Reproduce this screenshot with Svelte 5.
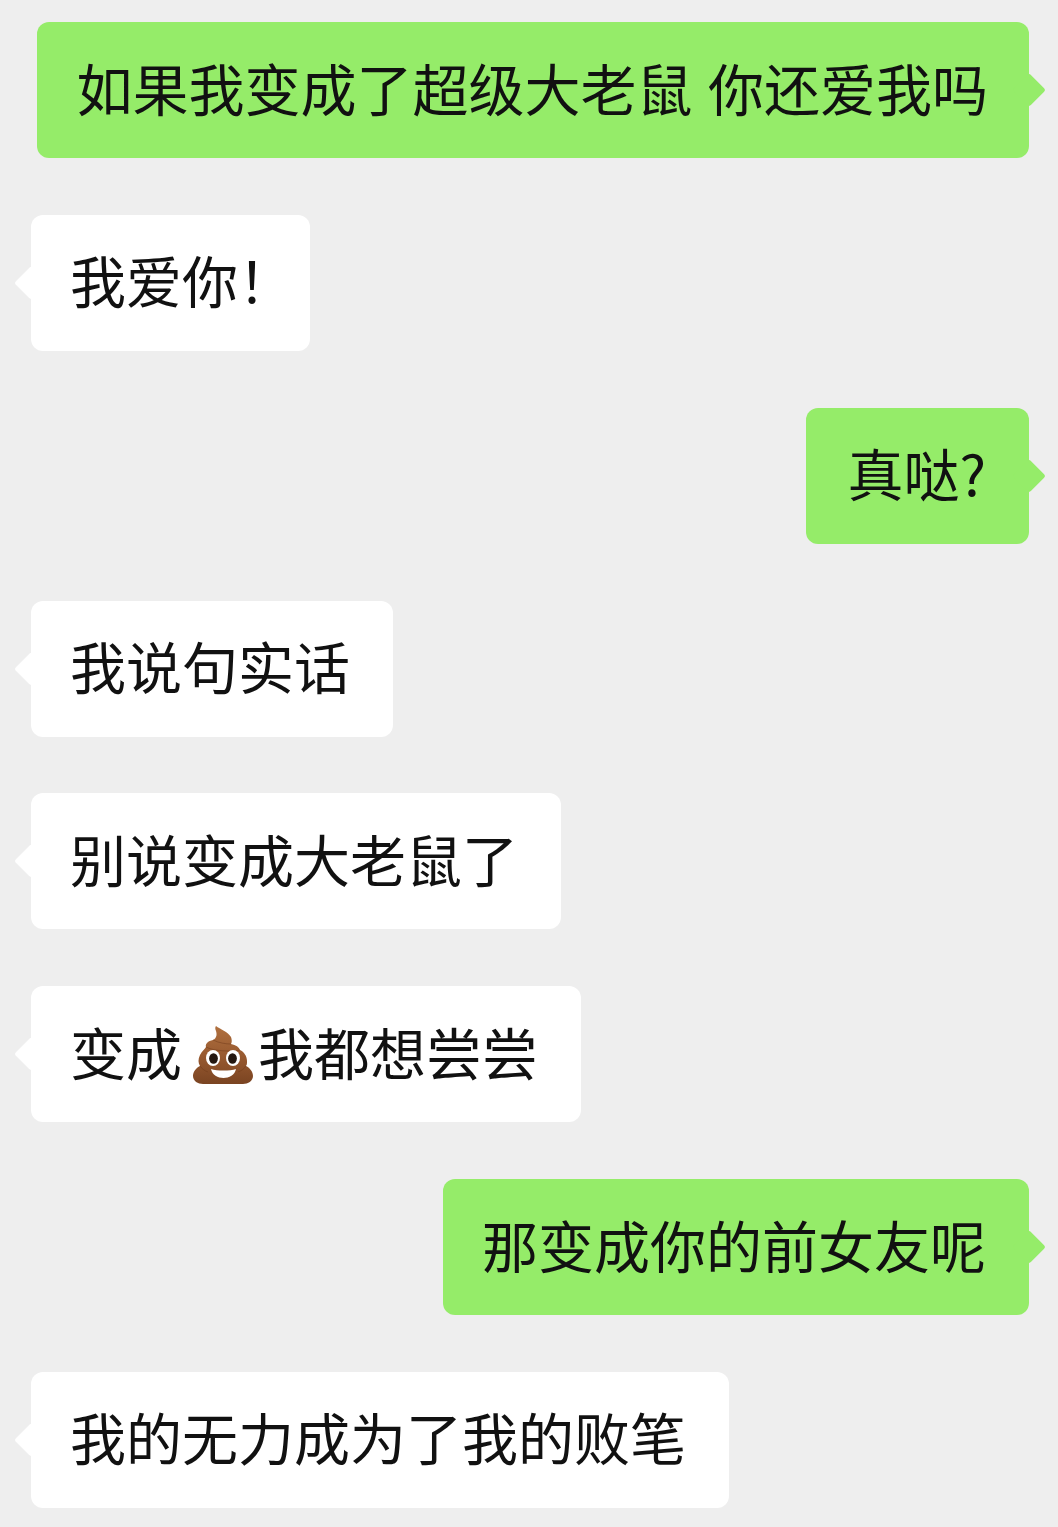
<script lang="ts">
	type Msg = { id: number; mine: boolean; parts: string[]; tight?: boolean; wide?: boolean; spaced?: boolean };

	// an empty part marks where the emoji sits
	const messages: Msg[] = [
		{ id: 1, mine: true, parts: ['如果我变成了超级大老鼠 你还爱我吗'], spaced: true },
		{ id: 2, mine: false, parts: ['我爱你！'], tight: true },
		{ id: 3, mine: true, parts: ['真哒?'], wide: true },
		{ id: 4, mine: false, parts: ['我说句实话'] },
		{ id: 5, mine: false, parts: ['别说变成大老鼠了'] },
		{ id: 6, mine: false, parts: ['变成', '', '我都想尝尝'] },
		{ id: 7, mine: true, parts: ['那变成你的前女友呢'] },
		{ id: 8, mine: false, parts: ['我的无力成为了我的败笔'] },
	];
</script>

<div class="chat">
	{#each messages as msg (msg.id)}
		<div class="bubble" class:mine={msg.mine} class:tight={msg.tight} class:wide={msg.wide} class:spaced={msg.spaced}>
			{#each msg.parts as part}
				{#if part}
					<span>{part}</span>
				{:else}
					<svg class="poop" viewBox="0 0 60 58" aria-label="poop emoji">
						<defs>
							<linearGradient id="poop-fill" x1="0" y1="0" x2="0" y2="1">
								<stop offset="0" stop-color="#b0703f" />
								<stop offset="0.55" stop-color="#96582f" />
								<stop offset="1" stop-color="#7a4422" />
							</linearGradient>
						</defs>
						<path
							fill="url(#poop-fill)"
							d="M23 0C27 3 35 6 38 11C39 14 39 16 38 18C43 19 46 21 47 24C51 26 54 30 54 35C54 37 54 39 53 40C57 42 60 46 60 50C60 55 55 58 50 58H10C5 58 0 55 0 50C0 46 3 42 7 40C5 37 5 33 7 29C9 25 12 23 13 21C12 18 15 15 20 14C24 12 24 8 23 5C22 3 22 1 23 0Z"
						/>
						<path fill="none" stroke="#70391a" stroke-width="1" opacity="0.5" d="M20 14C26 17 33 18 38 18M13 21C20 25 38 26 47 24M7 40C9 43 12 45 15 46M53 40C51 43 48 45 45 46" />
						<ellipse cx="20" cy="32" rx="7" ry="8" fill="#fff" />
						<ellipse cx="40" cy="32" rx="7" ry="8" fill="#fff" />
						<ellipse cx="20.5" cy="32.5" rx="4.4" ry="5.2" fill="#241710" />
						<ellipse cx="39.5" cy="32.5" rx="4.4" ry="5.2" fill="#241710" />
						<path fill="#fff" d="M18 43C24 45 37 45 43 43C42 49 36 52 30.5 52C25 52 19 49 18 43Z" />
					</svg>
				{/if}
			{/each}
		</div>
	{/each}
</div>

<style>
	:global(body) {
		margin: 0;
		background: #eeeeee;
	}

	.chat {
		display: flex;
		flex-direction: column;
		align-items: flex-start;
		gap: 56.85px;
		height: 1527px;
		box-sizing: border-box;
		padding: 22px 29px 0 31px;
		overflow: hidden;
	}

	.bubble {
		position: relative;
		display: flex;
		align-items: center;
		height: 136px;
		box-sizing: border-box;
		padding: 0 43px 8px 39px;
		background: #fff;
		border-radius: 12px;
		font-family: 'Noto Sans CJK SC', 'Noto Sans', sans-serif;
		font-size: 56px;
		color: #111;
		white-space: pre;
	}

	.bubble::after {
		content: '';
		position: absolute;
		top: 56px;
		left: -12px;
		width: 24px;
		height: 24px;
		background: inherit;
		border-radius: 3px;
		transform: rotate(45deg);
	}

	.bubble.mine {
		align-self: flex-end;
		background: #95ec69;
	}

	.bubble.mine::after {
		left: auto;
		right: -12px;
	}

	.bubble.wide {
		padding-left: 41px;
	}

	.bubble.spaced {
		padding-right: 41px;
		word-spacing: 3px;
	}

	.tight span {
		margin-right: -27px;
	}

	.poop {
		width: 60px;
		height: 58px;
		margin: 10px 5px 0 11px;
	}
</style>
